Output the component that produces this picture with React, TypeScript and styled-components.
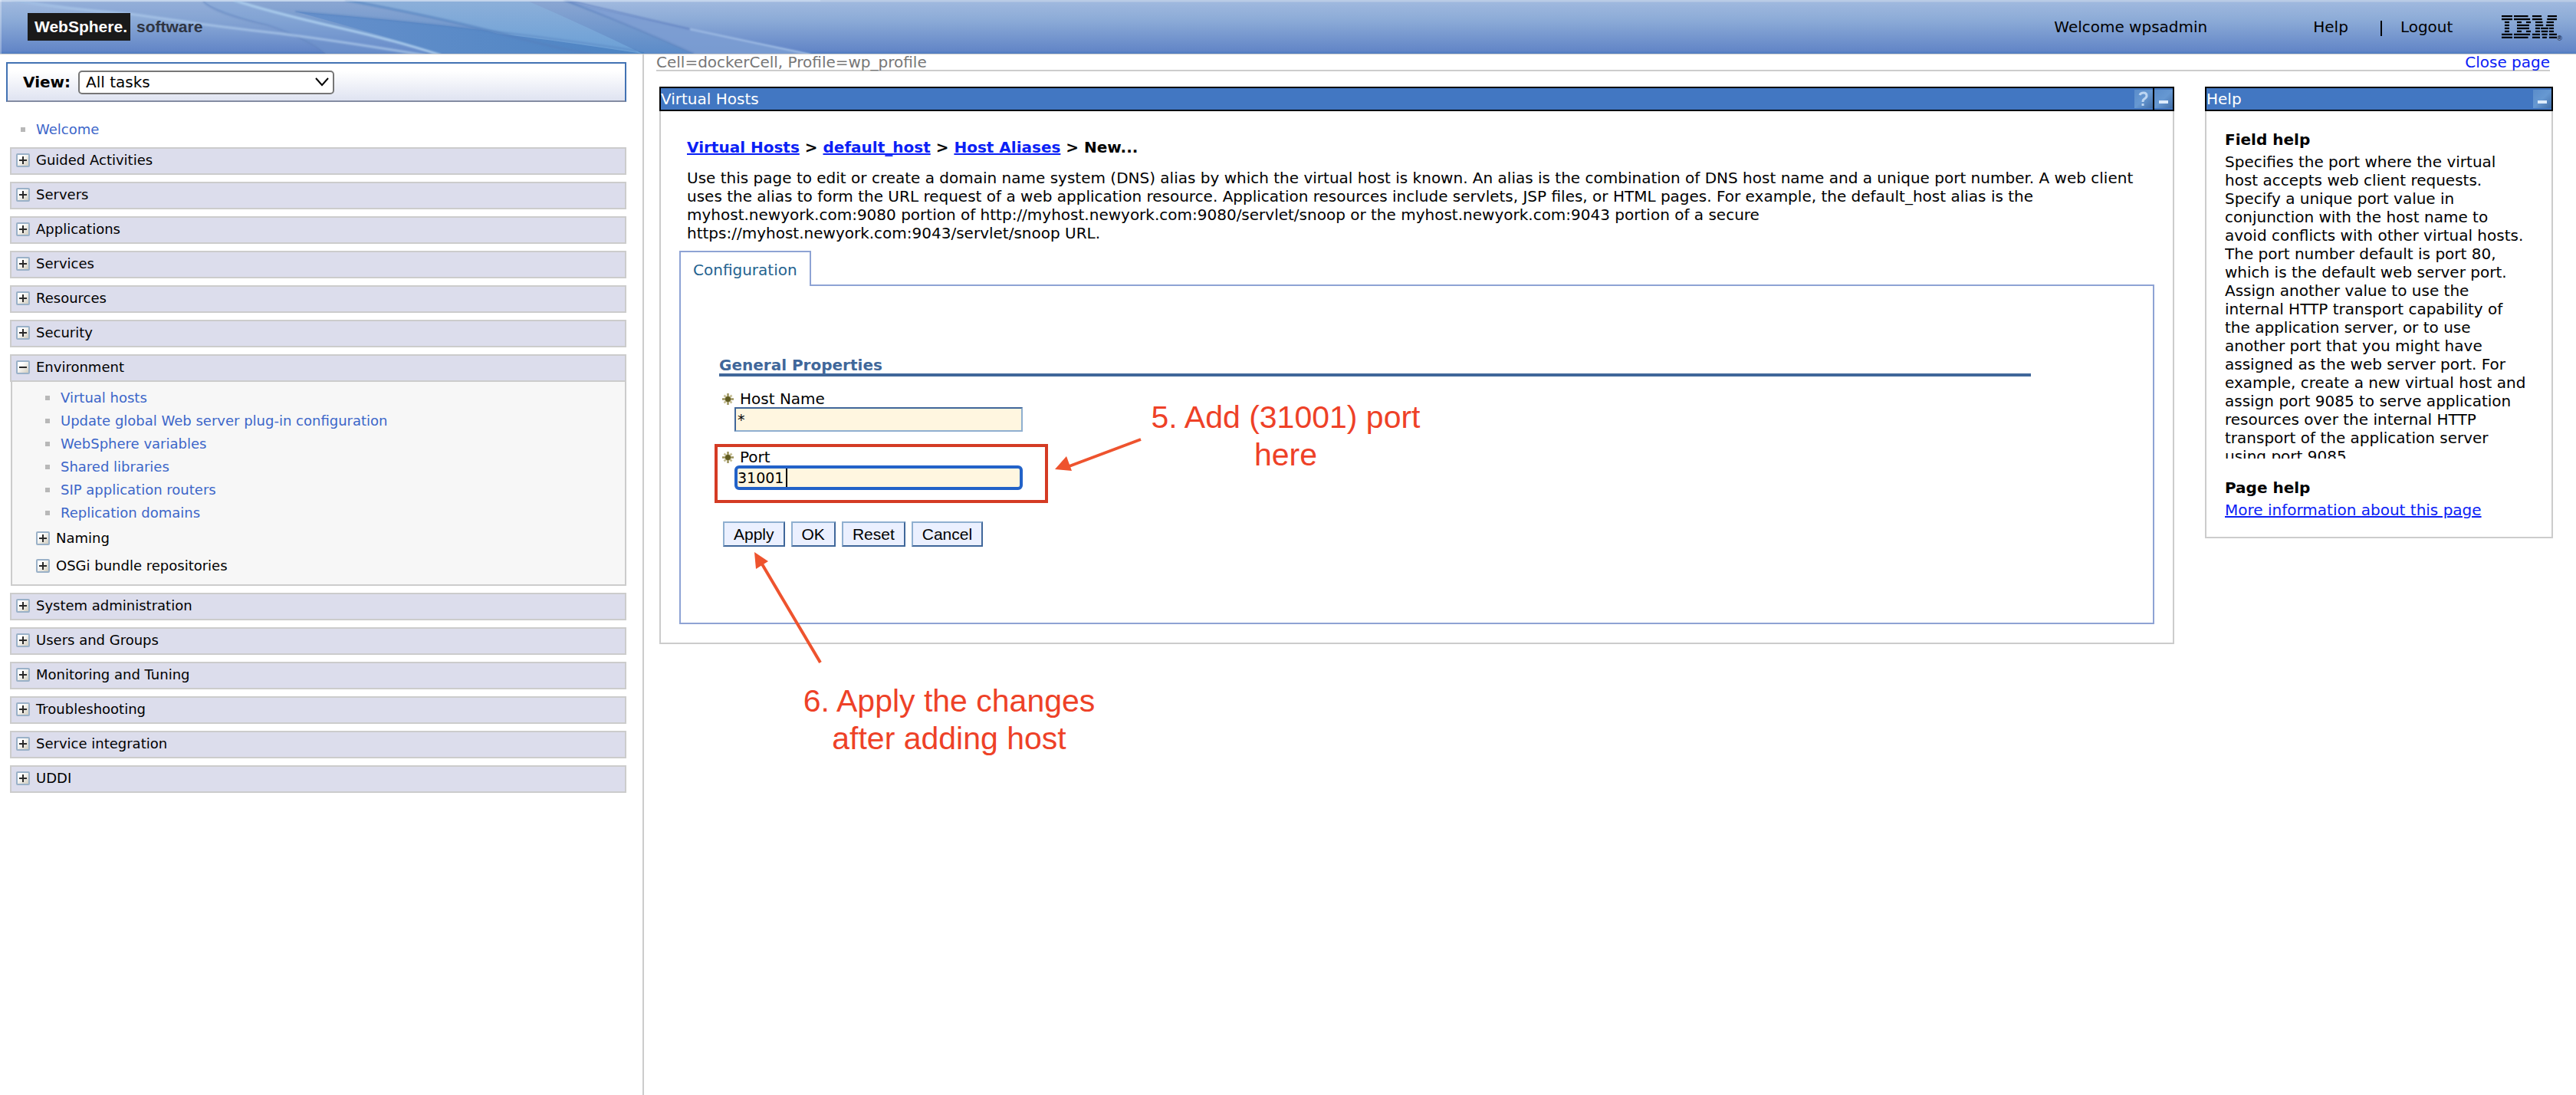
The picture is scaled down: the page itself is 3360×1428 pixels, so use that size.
import React from 'react';
import styled, { createGlobalStyle } from 'styled-components';

const SANS = '"DejaVu Sans", sans-serif';
const ARIAL = '"Liberation Sans", sans-serif';

const GlobalStyle = createGlobalStyle`
  *, *::before, *::after { box-sizing: border-box; }
  body { margin: 0; background: #fff; color: #000; font: 20px/24px ${SANS}; }
  h1, h2, p, ul { margin: 0; padding: 0; }
  ul { list-style: none; }
`;

const Page = styled.div`
  min-height: 100vh;
  display: flex;
  flex-direction: column;
`;

/* ---------- banner ---------- */

const Banner = styled.header`
  position: relative;
  display: flex;
  align-items: center;
  height: 71px;
  padding: 0 18px 0 36px;
  border-bottom: 1px solid #ccc;
  background: linear-gradient(#b9cbe6 0, #b9cbe6 2px, #9fb8de 3px, #8cabd7 26px, #6386c7 66px, #4f7cc1 70px);
`;

const Swoosh = styled.svg`
  position: absolute;
  left: 0;
  top: 0;
`;

const Brand = styled.div`
  position: relative;
  display: flex;
  align-items: center;
  gap: 8px;
  flex: 1;
  font: bold 21px/36px ${ARIAL};
  color: #2f3542;
`;

const BrandBox = styled.span`
  padding: 0 4px 0 9px;
  background: #1a1a1a;
  color: #fff;
`;

const BannerText = styled.span`
  margin-right: 138px;
`;

const BannerLinks = styled.nav`
  display: flex;
  align-items: center;
  margin-right: 64px;
`;

const BannerLink = styled.a`
  color: #000;
  text-decoration: none;
`;

const Divider = styled.span`
  width: 2px;
  height: 20px;
  margin: 4px 24px 0 42px;
  background: #000;
`;

const Registered = styled.span`
  align-self: flex-end;
  padding-bottom: 14px;
  font: 9px/12px ${ARIAL};
`;

/* ---------- navigation ---------- */

const Body = styled.div`
  flex: 1;
  display: flex;
`;

const Nav = styled.aside`
  width: 25%;
  padding: 10px 21px 20px 8px;
  border-right: 2px solid #ccc;
`;

const ViewBar = styled.div`
  display: flex;
  align-items: center;
  gap: 10px;
  height: 52px;
  padding-left: 20px;
  border: 2px solid #4272b3;
  border-bottom-color: #848ca2;
  background: linear-gradient(#fff 20%, #dfe3f1);
  font-weight: bold;
`;

const SelectWrap = styled.span`
  position: relative;
  display: flex;
`;

const Select = styled.select`
  appearance: none;
  width: 334px;
  height: 31px;
  padding: 0 8px;
  border: 2px solid #767676;
  border-radius: 5px;
  background: #fff;
  color: #000;
  font: 20px/24px ${SANS};
`;

const Chevron = styled.svg`
  position: absolute;
  right: 7px;
  top: 9px;
  pointer-events: none;
`;

const Bullet = styled.span`
  width: 6px;
  height: 6px;
  background: #b8b8b8;
`;

const NavLink = styled.a`
  color: #3c66c9;
  text-decoration: none;
`;

const WelcomeRow = styled.div`
  display: flex;
  align-items: center;
  gap: 14px;
  margin: 24px 0 11px 19px;
  font-size: 18px;
`;

const Groups = styled.ul`
  display: flex;
  flex-direction: column;
  gap: 9px;
  margin-left: 5px;
  font-size: 18px;
`;

const ToggleButton = styled.button`
  display: flex;
  align-items: center;
  gap: 8px;
  width: 100%;
  height: 36px;
  padding: 0;
  border: 0;
  background: none;
  color: #000;
  font: 18px/24px ${SANS};
  text-align: left;
`;

const GroupButton = styled(ToggleButton)`
  padding: 0 0 2px 6px;
  border: 2px solid #ccc;
  background: #dcddec;
`;

const GroupBody = styled.div`
  margin-left: 1px;
  padding: 6px 0 6px 31px;
  border: 2px solid #ccc;
  border-top: 0;
  background: #f7f7f7;
`;

const TaskRow = styled.li`
  display: flex;
  align-items: center;
  gap: 14px;
  height: 30px;
  padding-left: 12px;
`;

/* ---------- content ---------- */

const Content = styled.main`
  flex: 1;
  min-width: 0;
  padding: 0 30px 0 16px;
`;

const StatusRow = styled.div`
  display: flex;
  justify-content: space-between;
  margin: 0 4px 20px 0;
  border-bottom: 2px solid #ccc;
  line-height: 20px;
  color: #777;
`;

const CloseLink = styled.a`
  color: #0a20f5;
  text-decoration: none;
`;

const Columns = styled.div`
  display: flex;
  align-items: flex-start;
  gap: 40px;
  padding-left: 4px;
`;

const Portlet = styled.section<{ $width?: string }>`
  flex: ${(p) => (p.$width ? `0 0 ${p.$width}` : '1 1 0')};
  min-width: 0;
`;

const TitleBar = styled.div`
  display: flex;
  align-items: center;
  height: 32px;
  border: 2px solid #000;
  background: #4277c2;
  color: #fff;
`;

const TitleText = styled.h2`
  flex: 1;
  font-size: 20px;
  font-weight: normal;
`;

const IconButton = styled.button<{ $divided?: boolean }>`
  display: flex;
  align-items: center;
  height: 28px;
  padding: 0;
  border: 0;
  border-left: ${(p) => (p.$divided ? '2px solid #000' : '0')};
  background: none;
`;

const PortletBody = styled.div<{ $pad: string }>`
  padding: ${(p) => p.$pad};
  border: 2px solid #ccc;
  border-top: 0;
`;

const Breadcrumb = styled.h1`
  padding-left: 10px;
  font-size: 20px;
  line-height: 24px;
`;

const TextLink = styled.a`
  color: #0a20f5;
`;

const Description = styled.p`
  padding: 16px 0 11px 10px;
`;

const Tab = styled.button`
  position: relative;
  display: block;
  height: 46px;
  margin-bottom: -2px;
  padding: 2px 16px 0;
  border: 2px solid #8ea3d4;
  border-bottom: 0;
  background: #fff;
  color: #23628f;
  font: 20px/24px ${SANS};
`;

const TabPanel = styled.div`
  padding: 92px 50px 99px;
  border: 2px solid #8ea3d4;
`;

const SectionTitle = styled.h2`
  width: 94%;
  margin-bottom: 18px;
  border-bottom: 4px solid #40679a;
  color: #40679a;
  font-size: 20px;
  line-height: 22px;
`;

const Field = styled.div`
  position: relative;
  width: 396px;
  margin-bottom: 22px;
  padding-left: 20px;
`;

const FieldLabel = styled.label`
  display: flex;
  align-items: center;
  gap: 8px;
  margin-left: -16px;
  line-height: 22px;
`;

const TextInput = styled.input<{ $active?: boolean }>`
  display: block;
  width: 100%;
  height: 32px;
  padding: ${(p) => (p.$active ? '0' : '0 2px')};
  border: ${(p) => (p.$active ? '4px solid #2262c8' : '2px solid #8fafd0')};
  ${(p) => !p.$active && 'border-top-color: #40679a; border-left-color: #40679a;'}
  border-radius: ${(p) => (p.$active ? '6px' : '0')};
  outline: 0;
  background: #fff6e0;
  color: #000;
  font: 19px/24px ${SANS};
`;

const Caret = styled.span`
  position: absolute;
  left: 87px;
  bottom: 4px;
  width: 2px;
  height: 24px;
  background: #000;
`;

const Highlight = styled.div`
  position: absolute;
  left: -6px;
  top: -6px;
  width: 435px;
  height: 77px;
  border: 4px solid #d43b24;
  pointer-events: none;
`;

const Callout = styled.p<{ $left: number; $top: number }>`
  position: absolute;
  left: ${(p) => p.$left}px;
  top: ${(p) => p.$top}px;
  width: 400px;
  color: #ee4127;
  font: 41px/49px ${ARIAL};
  text-align: center;
`;

const Arrow = styled.svg<{ $left: number; $top: number }>`
  position: absolute;
  left: ${(p) => p.$left}px;
  top: ${(p) => p.$top}px;
  pointer-events: none;
`;

const Actions = styled.div`
  position: relative;
  display: flex;
  gap: 8px;
  margin: 41px 0 0 5px;
`;

const Action = styled.button`
  height: 33px;
  padding: 0 12px;
  border: 2px solid #40679a;
  border-top-color: #8fafd0;
  border-left-color: #8fafd0;
  background: #ebf0ff;
  color: #000;
  font: 21px/24px ${ARIAL};
`;

const FieldHelp = styled.p`
  height: 399px;
  margin: 5px 0 26px;
  overflow: hidden;
`;

const PageHelp = styled.p`
  margin-top: 5px;
`;

const HelpTitle = styled.h2`
  font-size: 20px;
  line-height: 24px;
`;

/* ---------- drawings ---------- */

const BannerArt = () => (
  <Swoosh width="1070" height="70" viewBox="0 0 1070 70" fill="none" aria-hidden="true">
    <defs>
      <linearGradient id="cyan" x1="0" y1="0" x2="0" y2="1">
        <stop offset="0" stopColor="#8cafd9" />
        <stop offset="1" stopColor="#6a9fd6" />
      </linearGradient>
      <linearGradient id="deep" x1="0" y1="0" x2="0" y2="1">
        <stop offset="0" stopColor="#8aa6d2" />
        <stop offset="1" stopColor="#5b8bc8" />
      </linearGradient>
      <linearGradient id="wedge" x1="0" y1="0" x2="1" y2="0">
        <stop offset="0" stopColor="#6690cb" />
        <stop offset="1" stopColor="#4d84c3" />
      </linearGradient>
      <filter id="soft" x="-5%" y="-20%" width="110%" height="140%">
        <feGaussianBlur stdDeviation="1" />
      </filter>
    </defs>
    <path d="M15 2Q90 12 170 18Q280 34 350 42T555 70H425Q400 52 350 33Q280 12 265 2Z" fill="#6f8fc6" opacity=".25" />
    <path d="M265 2Q280 18 350 33Q400 50 425 70H575Q500 48 345 13L305 2Z" fill="#7298d0" opacity=".4" />
    <path d="M305 2H738Q870 32 1057 70H575Q500 50 345 13Z" fill="url(#deep)" />
    <path d="M385 15Q620 34 840 68V70H575Q520 52 385 15Z" fill="url(#wedge)" />
    <path d="M450 2H690Q760 32 838 70Q720 52 650 44Q570 22 450 2Z" fill="url(#cyan)" />
    <path d="M738 2Q870 32 1057 70H905Q820 32 738 2Z" fill="#7f9fd3" opacity=".8" />
    <g filter="url(#soft)">
      <path d="M265 2Q280 18 350 33Q400 50 425 70" stroke="#6283bd" strokeWidth="2" opacity=".5" />
      <path d="M450 0Q570 22 650 43T770 70" stroke="#5680bd" strokeWidth="3" opacity=".7" />
      <path d="M385 15Q620 34 830 66" stroke="#4f7dbb" strokeWidth="2" opacity=".5" />
      <path d="M735 0Q820 32 905 70" stroke="#6187c0" strokeWidth="2" opacity=".8" />
      <path d="M738 0L900 38" stroke="#6787c4" strokeWidth="2" />
      <path d="M900 38L1057 71" stroke="#a3bfe6" strokeWidth="2" />
      <path d="M15 0Q90 12 170 18Q280 34 350 42T555 72" stroke="#a9c5e8" strokeWidth="3" opacity=".8" />
      <path d="M305 0Q345 14 450 38Q520 54 575 72" stroke="#a9cbec" strokeWidth="3" />
    </g>
    <path d="M0 1H1070" stroke="#c9d9ee" strokeWidth="2" opacity=".7" />
    <path d="M1 0V70" stroke="#fff" strokeWidth="2" opacity=".3" />
  </Swoosh>
);

const IBM_STRIPES: number[][][] = [
  [[0, 194], [222, 480], [555, 723], [833, 1000]],
  [[0, 194], [222, 515], [555, 733], [823, 1000]],
  [[55, 139], [278, 361], [444, 528], [611, 743], [813, 945]],
  [[55, 139], [278, 500], [611, 753], [803, 945]],
  [[55, 139], [278, 500], [611, 694], [709, 847], [861, 945]],
  [[55, 139], [278, 361], [444, 528], [611, 694], [718, 838], [861, 945]],
  [[0, 194], [222, 515], [555, 694], [728, 828], [861, 1000]],
  [[0, 194], [222, 480], [555, 694], [738, 818], [861, 1000]],
];

const IbmLogo = () => (
  <svg width="72" height="30" viewBox="0 0 1000 416" role="img" aria-label="IBM" preserveAspectRatio="none">
    {IBM_STRIPES.map((row, y) =>
      row.map(([a, b]) => <rect key={`${y}-${a}`} x={a} y={y * 55} width={b - a} height="31" />),
    )}
  </svg>
);

const Toggle = ({ open = false }: { open?: boolean }) => (
  <svg width="18" height="18" viewBox="0 0 18 18" aria-hidden="true">
    <defs>
      <linearGradient id="toggleFill" x1="0" y1="0" x2="1" y2="1">
        <stop offset=".3" stopColor="#fff" />
        <stop offset="1" stopColor="#cdc8b8" />
      </linearGradient>
    </defs>
    <rect x="1" y="1" width="16" height="16" rx="1" fill="url(#toggleFill)" stroke="#9ab1c8" strokeWidth="2" />
    <path d={open ? 'M4 9H14' : 'M4 9H14M9 4V14'} stroke="#2a2a2a" strokeWidth="2" />
  </svg>
);

const TitleIcon = ({ help = false }: { help?: boolean }) => (
  <svg width="24" height="24" viewBox="0 0 24 24" fill="none" aria-hidden="true">
    <defs>
      <linearGradient id="titleFill" x1="0" y1="0" x2="1" y2="1">
        <stop offset="0" stopColor="#5a8cca" />
        <stop offset=".5" stopColor="#6698d2" />
        <stop offset="1" stopColor="#426fa8" />
      </linearGradient>
    </defs>
    <rect width="24" height="24" fill="url(#titleFill)" />
    {help ? (
      <path d="M7 7Q8 4 12 4Q16 4 16 8Q16 10 13 12Q11 13 11 16M11 18V21" stroke="#bdd6f2" strokeWidth="3" />
    ) : (
      <path d="M6 16H18" stroke="#dcebfb" strokeWidth="4" />
    )}
  </svg>
);

const RequiredMark = () => (
  <svg width="15" height="15" viewBox="0 0 30 30" role="img" aria-label="Required">
    <path d="M5 5L25 25M25 5L5 25" stroke="#c3bc92" strokeWidth="5" />
    <path d="M15 0V30M0 15H30" stroke="#9b925c" strokeWidth="5" />
    <circle cx="15" cy="15" r="7" fill="#5f5a20" />
  </svg>
);

/* ---------- data ---------- */

type Group = { label: string; tasks?: string[]; children?: string[] };

const GROUPS: Group[] = [
  { label: 'Guided Activities' },
  { label: 'Servers' },
  { label: 'Applications' },
  { label: 'Services' },
  { label: 'Resources' },
  { label: 'Security' },
  {
    label: 'Environment',
    tasks: [
      'Virtual hosts',
      'Update global Web server plug-in configuration',
      'WebSphere variables',
      'Shared libraries',
      'SIP application routers',
      'Replication domains',
    ],
    children: ['Naming', 'OSGi bundle repositories'],
  },
  { label: 'System administration' },
  { label: 'Users and Groups' },
  { label: 'Monitoring and Tuning' },
  { label: 'Troubleshooting' },
  { label: 'Service integration' },
  { label: 'UDDI' },
];

const NavGroup = ({ label, tasks, children }: Group) => (
  <li>
    <GroupButton type="button" aria-expanded={!!tasks}>
      <Toggle open={!!tasks} />
      {label}
    </GroupButton>
    {tasks && (
      <GroupBody>
        <ul>
          {tasks.map((task) => (
            <TaskRow key={task}>
              <Bullet />
              <NavLink href="#">{task}</NavLink>
            </TaskRow>
          ))}
        </ul>
        {children?.map((child) => (
          <ToggleButton type="button" key={child}>
            <Toggle />
            {child}
          </ToggleButton>
        ))}
      </GroupBody>
    )}
  </li>
);

export default function App() {
  return (
    <Page>
      <GlobalStyle />
      <Banner>
        <BannerArt />
        <Brand>
          <BrandBox>WebSphere.</BrandBox>
          <span>software</span>
        </Brand>
        <BannerText>Welcome wpsadmin</BannerText>
        <BannerLinks>
          <BannerLink href="#">Help</BannerLink>
          <Divider />
          <BannerLink href="#">Logout</BannerLink>
        </BannerLinks>
        <IbmLogo />
        <Registered>®</Registered>
      </Banner>

      <Body>
        <Nav>
          <ViewBar>
            <label htmlFor="view">View:</label>
            <SelectWrap>
              <Select id="view" defaultValue="all">
                <option value="all">All tasks</option>
              </Select>
              <Chevron width="18" height="12" viewBox="0 0 18 12" fill="none">
                <path d="M1 1L9 10L17 1" stroke="#000" strokeWidth="2" />
              </Chevron>
            </SelectWrap>
          </ViewBar>
          <WelcomeRow>
            <Bullet />
            <NavLink href="#">Welcome</NavLink>
          </WelcomeRow>
          <Groups>
            {GROUPS.map((group) => (
              <NavGroup key={group.label} {...group} />
            ))}
          </Groups>
        </Nav>

        <Content>
          <StatusRow>
            <span>Cell=dockerCell, Profile=wp_profile</span>
            <CloseLink href="#">Close page</CloseLink>
          </StatusRow>
          <Columns>
            <Portlet>
              <TitleBar>
                <TitleText>Virtual Hosts</TitleText>
                <IconButton type="button" aria-label="Help for this page">
                  <TitleIcon help />
                </IconButton>
                <IconButton type="button" aria-label="Minimize" $divided>
                  <TitleIcon />
                </IconButton>
              </TitleBar>
              <PortletBody $pad="35px 24px 24px">
                <Breadcrumb>
                  <TextLink href="#">Virtual Hosts</TextLink> {'> '}
                  <TextLink href="#">default_host</TextLink> {'> '}
                  <TextLink href="#">Host Aliases</TextLink> {'> New...'}
                </Breadcrumb>
                <Description>
                  Use this page to edit or create a domain name system (DNS) alias by which the virtual host is known.
                  An alias is the combination of DNS host name and a unique port number. A web client
                  <br />
                  uses the alias to form the URL request of a web application resource. Application resources include
                  servlets, JSP files, or HTML pages. For example, the default_host alias is the
                  <br />
                  myhost.newyork.com:9080 portion of http://myhost.newyork.com:9080/servlet/snoop or the
                  myhost.newyork.com:9043 portion of a secure
                  <br />
                  https://myhost.newyork.com:9043/servlet/snoop URL.
                </Description>
                <Tab type="button">Configuration</Tab>
                <TabPanel>
                  <SectionTitle>General Properties</SectionTitle>
                  <Field>
                    <FieldLabel htmlFor="host">
                      <RequiredMark />
                      Host Name
                    </FieldLabel>
                    <TextInput id="host" defaultValue="*" />
                  </Field>
                  <Field>
                    <FieldLabel htmlFor="port">
                      <RequiredMark />
                      Port
                    </FieldLabel>
                    <TextInput id="port" defaultValue="31001" $active />
                    <Caret />
                    <Highlight />
                    <Arrow $left={436} $top={-15} width="120" height="50" viewBox="0 0 120 50">
                      <path d="M114 3L18 39" stroke="#ee532e" strokeWidth="4" />
                      <path d="M2 42L17 25L24 44Z" fill="#ee532e" />
                    </Arrow>
                    <Callout $left={539} $top={-65}>
                      5. Add (31001) port
                      <br />
                      here
                    </Callout>
                  </Field>
                  <Actions>
                    <Action type="button">Apply</Action>
                    <Action type="button">OK</Action>
                    <Action type="button">Reset</Action>
                    <Action type="button">Cancel</Action>
                    <Arrow $left={39} $top={38} width="94" height="152" viewBox="0 0 94 152">
                      <path d="M88 146L11 16" stroke="#ee532e" strokeWidth="4" />
                      <path d="M2 2L20 14L4 24Z" fill="#ee532e" />
                    </Arrow>
                    <Callout $left={95} $top={210}>
                      6. Apply the changes
                      <br />
                      after adding host
                    </Callout>
                  </Actions>
                </TabPanel>
              </PortletBody>
            </Portlet>

            <Portlet $width="454px">
              <TitleBar>
                <TitleText>Help</TitleText>
                <IconButton type="button" aria-label="Minimize help">
                  <TitleIcon />
                </IconButton>
              </TitleBar>
              <PortletBody $pad="25px 30px 23px 24px">
                <HelpTitle>Field help</HelpTitle>
                <FieldHelp>
                  Specifies the port where the virtual host accepts web client requests. Specify a unique port value in
                  conjunction with the host name to avoid conflicts with other virtual hosts. The port number default
                  is port 80, which is the default web server port. Assign another value to use the internal HTTP
                  transport capability of the application server, or to use another port that you might have assigned
                  as the web server port. For example, create a new virtual host and assign port 9085 to serve
                  application resources over the internal HTTP transport of the application server using port 9085.
                </FieldHelp>
                <HelpTitle>Page help</HelpTitle>
                <PageHelp>
                  <TextLink href="#">More information about this page</TextLink>
                </PageHelp>
              </PortletBody>
            </Portlet>
          </Columns>
        </Content>
      </Body>
    </Page>
  );
}
